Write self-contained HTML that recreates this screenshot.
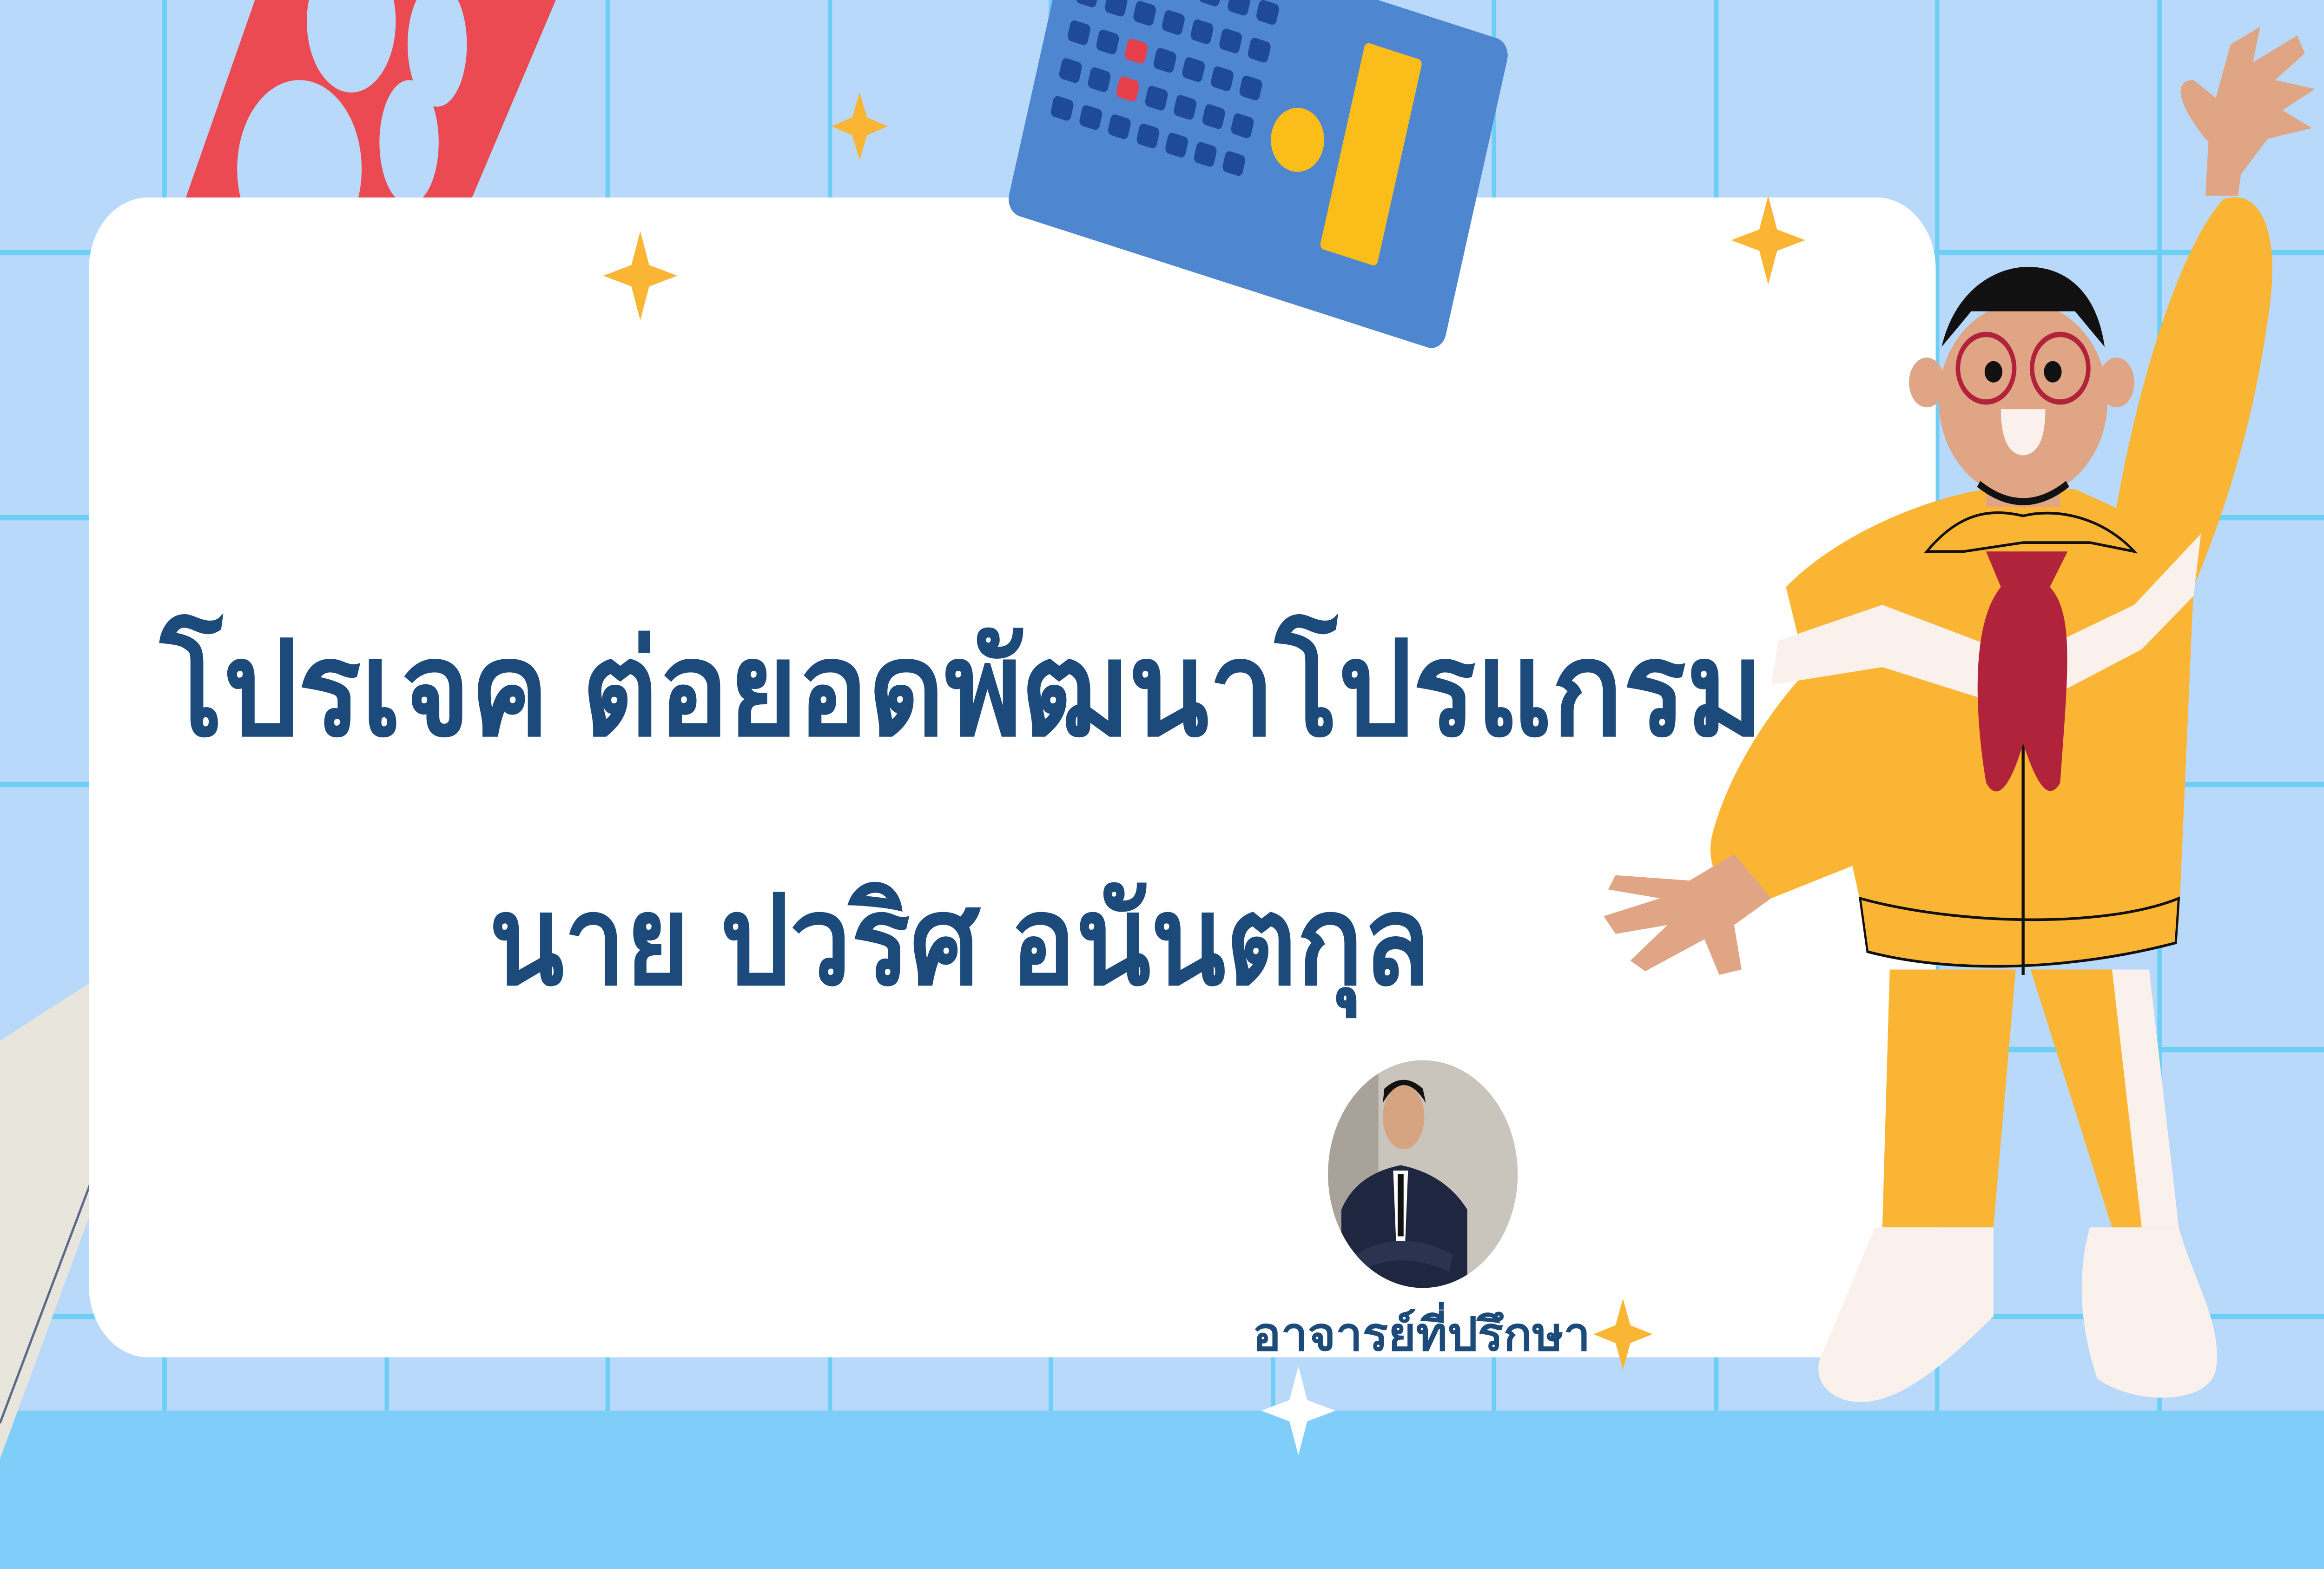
<!DOCTYPE html>
<html><head><meta charset="utf-8"><style>
html,body{margin:0;padding:0;width:100vw;height:100vh;overflow:hidden;background:#b8d9fa}
svg{display:block;width:100vw;height:100vh}
</style></head><body>
<svg viewBox="0 0 1568 882" preserveAspectRatio="none" xmlns="http://www.w3.org/2000/svg">
<rect width="1568" height="882" fill="#b8d9fa"/>
<g stroke="#6dcff5" stroke-width="3">
<line x1="111" y1="0" x2="111" y2="882"/><line x1="261" y1="0" x2="261" y2="882"/><line x1="410" y1="0" x2="410" y2="882"/><line x1="560" y1="0" x2="560" y2="882"/><line x1="709" y1="0" x2="709" y2="882"/><line x1="859" y1="0" x2="859" y2="882"/><line x1="1008" y1="0" x2="1008" y2="882"/><line x1="1158" y1="0" x2="1158" y2="882"/><line x1="1307" y1="0" x2="1307" y2="882"/><line x1="1457" y1="0" x2="1457" y2="882"/>
<line x1="0" y1="142" x2="1568" y2="142"/><line x1="0" y1="291" x2="1568" y2="291"/><line x1="0" y1="441" x2="1568" y2="441"/><line x1="0" y1="590" x2="1568" y2="590"/><line x1="0" y1="740" x2="1568" y2="740"/>
</g>
<rect x="0" y="793" width="1568" height="89" fill="#7ecef9"/>
<path d="M172,0 L375,0 L318,112 L125,112 Z" fill="#eb4a52"/>
<ellipse cx="202" cy="95" rx="42" ry="50" fill="#b8d9fa"/>
<ellipse cx="237" cy="12" rx="30" ry="40" fill="#b8d9fa"/>
<ellipse cx="295" cy="25" rx="20" ry="35" fill="#b8d9fa"/>
<ellipse cx="276" cy="80" rx="20" ry="35" fill="#b8d9fa"/>
<path d="M0,585 L112,525 Q128,522 124,540 L0,820 Z" fill="#e8e5dc"/>
<path d="M120,535 L0,800" stroke="#5a6a88" stroke-width="1.5" fill="none"/>
<rect x="60" y="111" width="1246" height="652" rx="40" fill="#fff"/>
<g transform="rotate(15 840 95)">
<rect x="690" y="-20" width="305" height="180" rx="10" fill="#4f86d0"/>
<rect x="900" y="5" width="40" height="120" rx="3" fill="#fbbd1a"/>
<circle cx="870" cy="70" r="18" fill="#fbbd1a"/>
<g fill="#1f4a9a">
<rect x="705" y="0" width="14" height="12" rx="3"/><rect x="725" y="0" width="14" height="12" rx="3"/><rect x="745" y="0" width="14" height="12" rx="3"/><rect x="765" y="0" width="14" height="12" rx="3"/><rect x="785" y="0" width="14" height="12" rx="3"/><rect x="805" y="0" width="14" height="12" rx="3"/><rect x="825" y="0" width="14" height="12" rx="3"/>
<rect x="705" y="22" width="14" height="12" rx="3"/><rect x="725" y="22" width="14" height="12" rx="3"/><rect x="745" y="22" width="14" height="12" rx="3"/><rect x="765" y="22" width="14" height="12" rx="3"/><rect x="785" y="22" width="14" height="12" rx="3"/><rect x="805" y="22" width="14" height="12" rx="3"/><rect x="825" y="22" width="14" height="12" rx="3"/>
<rect x="705" y="44" width="14" height="12" rx="3"/><rect x="725" y="44" width="14" height="12" rx="3"/><rect x="765" y="44" width="14" height="12" rx="3"/><rect x="785" y="44" width="14" height="12" rx="3"/><rect x="805" y="44" width="14" height="12" rx="3"/><rect x="825" y="44" width="14" height="12" rx="3"/>
<rect x="705" y="66" width="14" height="12" rx="3"/><rect x="725" y="66" width="14" height="12" rx="3"/><rect x="765" y="66" width="14" height="12" rx="3"/><rect x="785" y="66" width="14" height="12" rx="3"/><rect x="805" y="66" width="14" height="12" rx="3"/><rect x="825" y="66" width="14" height="12" rx="3"/>
<rect x="705" y="88" width="14" height="12" rx="3"/><rect x="725" y="88" width="14" height="12" rx="3"/><rect x="745" y="88" width="14" height="12" rx="3"/><rect x="765" y="88" width="14" height="12" rx="3"/><rect x="785" y="88" width="14" height="12" rx="3"/><rect x="805" y="88" width="14" height="12" rx="3"/><rect x="825" y="88" width="14" height="12" rx="3"/>
</g>
<rect x="745" y="44" width="14" height="12" rx="3" fill="#e8404a"/><rect x="745" y="66" width="14" height="12" rx="3" fill="#e8404a"/>
</g>
<g fill="#fbb535">
<path d="M432,130 L438,149 L457,155 L438,161 L432,180 L426,161 L407,155 L426,149 Z"/>
<path d="M580,52 L585,66 L599,71 L585,76 L580,90 L575,76 L561,71 L575,66 Z"/>
<path d="M1193,110 L1199,129 L1218,135 L1199,141 L1193,160 L1187,141 L1168,135 L1187,129 Z"/>
<path d="M1095,730 L1100,745 L1115,750 L1100,755 L1095,770 L1090,755 L1075,750 L1090,745 Z"/>
</g>
<path d="M876,768 L882,787 L901,793 L882,799 L876,818 L870,799 L851,793 L870,787 Z" fill="#fff"/>
<g>
<path d="M1425,300 C1440,220 1470,140 1500,112 C1525,105 1540,130 1530,180 C1520,240 1500,290 1480,330 L1440,390 Z" fill="#fbb535"/>
<path d="M1488,110 L1490,80 C1470,60 1465,45 1480,45 L1495,55 L1505,25 L1525,15 L1520,35 L1550,20 L1555,30 L1535,45 L1562,50 L1540,62 L1560,72 L1530,78 L1512,98 L1510,110 Z" fill="#dfa584"/>
<path d="M1300,330 C1230,350 1170,420 1155,470 C1150,490 1165,510 1195,505 L1270,480 Z" fill="#fbb535"/>
<path d="M1170,480 L1140,495 L1090,492 L1085,500 L1120,505 L1082,515 L1090,525 L1125,520 L1100,540 L1110,546 L1150,528 L1160,548 L1175,545 L1170,520 L1195,505 Z" fill="#dfa584"/>
<path d="M1275,545 L1360,545 L1345,690 L1270,690 Z" fill="#fbb535"/>
<path d="M1370,545 L1450,545 L1470,690 L1425,690 Z" fill="#fbb535"/>
<path d="M1425,545 L1450,545 L1470,690 L1445,690 Z" fill="#fbf1ec"/>
<path d="M1205,330 C1240,300 1300,280 1340,275 L1400,275 C1440,290 1470,300 1480,330 L1470,520 L1260,525 L1240,450 Z" fill="#fbb535"/>
<path d="M1200,360 L1270,340 L1365,370 L1440,340 L1485,300 L1480,335 L1445,365 L1365,400 L1270,375 L1195,385 Z" fill="#fbf1ec"/>
<path d="M1255,505 C1320,520 1420,522 1470,505 L1468,530 C1400,545 1320,548 1260,535 Z" fill="#fbb535" stroke="#111" stroke-width="1.5"/>
<line x1="1365" y1="400" x2="1365" y2="548" stroke="#111" stroke-width="2"/>
<path d="M1300,310 C1320,290 1340,285 1365,290 C1390,285 1420,292 1440,310 L1410,305 L1365,305 L1325,310 Z" fill="#fbb535" stroke="#111" stroke-width="1.5"/>
<path d="M1340,310 L1395,310 L1383,330 C1400,345 1395,380 1390,440 C1380,455 1370,430 1365,418 C1360,432 1350,455 1340,440 C1332,400 1330,350 1350,330 Z" fill="#b0233a"/>
<circle cx="1408" cy="338" r="13" fill="#fbb535"/>
<rect x="1340" y="255" width="50" height="30" fill="#dfa584"/>
<ellipse cx="1300" cy="215" rx="12" ry="14" fill="#dfa584"/>
<ellipse cx="1428" cy="215" rx="12" ry="14" fill="#dfa584"/>
<ellipse cx="1365" cy="225" rx="57" ry="55" fill="#dfa584"/>
<path d="M1310,195 C1320,160 1350,150 1368,150 C1395,150 1415,165 1420,195 L1400,175 L1330,175 Z" fill="#111"/>
<circle cx="1340" cy="207" r="19" fill="none" stroke="#b0233a" stroke-width="3"/>
<circle cx="1390" cy="207" r="19" fill="none" stroke="#b0233a" stroke-width="3"/>
<circle cx="1345" cy="209" r="6" fill="#111"/><circle cx="1385" cy="209" r="6" fill="#111"/>
<path d="M1350,230 L1380,230 Q1380,255 1365,256 Q1350,255 1350,230 Z" fill="#fbf1ec"/>
<path d="M1335,272 Q1365,292 1395,272" stroke="#111" stroke-width="4" fill="none"/>
<path d="M1265,690 L1345,690 L1345,740 C1320,760 1290,785 1260,788 C1235,790 1220,775 1230,760 Z" fill="#fbf1ec"/>
<path d="M1410,690 L1470,690 C1480,720 1500,745 1495,770 C1490,790 1440,790 1415,775 C1405,750 1400,720 1410,690 Z" fill="#fbf1ec"/>
</g>
<text x="108" y="413" font-family="'Liberation Sans','DejaVu Sans',sans-serif" font-weight="bold" font-size="74" fill="#1c4a7a" textLength="1082" lengthAdjust="spacingAndGlyphs">โปรเจค ต่อยอดพัฒนาโปรแกรม</text>
<text x="330" y="553" font-family="'Liberation Sans','DejaVu Sans',sans-serif" font-weight="bold" font-size="70" fill="#1c4a7a" textLength="635" lengthAdjust="spacingAndGlyphs">นาย ปวริศ อนันตกุล</text>
<defs><clipPath id="c"><circle cx="960" cy="660" r="64"/></clipPath></defs>
<g clip-path="url(#c)">
<rect x="890" y="590" width="140" height="140" fill="#c9c4bc"/>
<rect x="890" y="590" width="40" height="140" fill="#a8a29a"/>
<path d="M905,730 L905,680 Q915,660 945,655 Q975,660 990,680 L990,730 Z" fill="#1f2640"/>
<path d="M940,658 L950,658 L948,700 L945,705 L942,700 Z" fill="#fff"/>
<rect x="943" y="660" width="4" height="35" fill="#111"/>
<ellipse cx="947" cy="628" rx="14" ry="18" fill="#d7a482"/>
<path d="M933,620 Q947,600 962,620 L960,612 Q947,602 934,612 Z" fill="#111"/>
<path d="M915,705 Q945,690 980,705 L978,715 Q945,702 917,715 Z" fill="#2b3350"/>
</g>
<text x="845" y="759" font-family="'Liberation Sans','DejaVu Sans',sans-serif" font-weight="bold" font-size="26" fill="#1c4a7a" textLength="228" lengthAdjust="spacingAndGlyphs">อาจารย์ที่ปรึกษา</text>
</svg>
</body></html>
